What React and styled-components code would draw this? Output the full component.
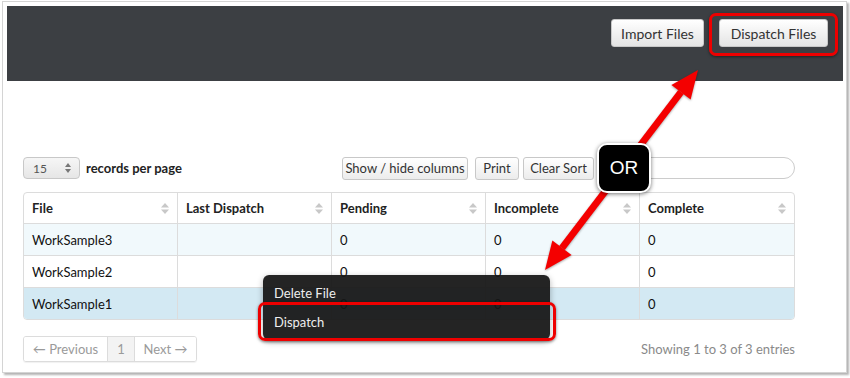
import React from 'react';
import styled, { createGlobalStyle } from 'styled-components';

const GlobalStyle = createGlobalStyle`
    html, body {
        margin: 0;
        padding: 0;
        background: #fff;
        font-family: Lato, "Open Sans", "Liberation Sans", sans-serif;
        color: #222;
    }
`;

const columns = ['File', 'Last Dispatch', 'Pending', 'Incomplete', 'Complete'];

const rows = [
    { file: 'WorkSample3', last: '', pending: '0', incomplete: '0', complete: '0', tone: 'stripe' },
    { file: 'WorkSample2', last: '', pending: '0', incomplete: '0', complete: '0', tone: 'plain' },
    { file: 'WorkSample1', last: '', pending: '0', incomplete: '0', complete: '0', tone: 'selected' },
];

const rowColors = {
    stripe: '#f1f9fc',
    plain: '#ffffff',
    selected: '#d3e9f3',
};

const SortIcon = () => (
    <svg width="8" height="11" viewBox="0 0 8 11">
        <path d="M4 0 L8 4.5 H0 Z" fill="#c8c8c8" />
        <path d="M4 11 L8 6.5 H0 Z" fill="#c8c8c8" />
    </svg>
);

const SpinIcon = () => (
    <svg width="6" height="10" viewBox="0 0 6 10">
        <path d="M3 0 L6 4 H0 Z" fill="#777" />
        <path d="M3 10 L6 6 H0 Z" fill="#777" />
    </svg>
);

const App = () => {
    return (
        <Page>
            <GlobalStyle />
            <Frame>
                <Header>
                    <HeadButton>Import Files</HeadButton>
                    <HeadButton $wide>Dispatch Files</HeadButton>
                </Header>
                <Content>
                    <Toolbar>
                        <PerPage>
                            <Select>
                                <span>15</span>
                                <SpinIcon />
                            </Select>
                            <span>records per page</span>
                        </PerPage>
                        <Tools>
                            <ToolButton $w={126}>Show / hide columns</ToolButton>
                            <ToolButton $w={44} $gap={7}>Print</ToolButton>
                            <ToolButton $w={71} $gap={4}>Clear Sort</ToolButton>
                            <Search />
                        </Tools>
                    </Toolbar>
                    <Table>
                        <thead>
                            <tr>
                                {columns.map((c) => (
                                    <th key={c}>
                                        <HeadCell>
                                            {c}
                                            <SortIcon />
                                        </HeadCell>
                                    </th>
                                ))}
                            </tr>
                        </thead>
                        <tbody>
                            {rows.map((r) => (
                                <Row key={r.file} $tone={r.tone}>
                                    <td>{r.file}</td>
                                    <td>{r.last}</td>
                                    <td>{r.pending}</td>
                                    <td>{r.incomplete}</td>
                                    <td>{r.complete}</td>
                                </Row>
                            ))}
                        </tbody>
                    </Table>
                    <Footer>
                        <Pager>
                            <PageItem $w={83}>← Previous</PageItem>
                            <PageItem $w={27} $active>1</PageItem>
                            <PageItem $w={62}>Next →</PageItem>
                        </Pager>
                        <Info>Showing 1 to 3 of 3 entries</Info>
                    </Footer>
                </Content>
            </Frame>

            <ContextMenu>
                <MenuItem>Delete File</MenuItem>
                <MenuItem>Dispatch</MenuItem>
            </ContextMenu>

            <Highlight $x={709} $y={13} $w={129} $h={43} />
            <Highlight $x={258} $y={302} $w={298} $h={39} />

            <Arrow width="850" height="378" viewBox="0 0 850 378">
                <line x1="562" y1="248" x2="681" y2="92" stroke="#f40000" strokeWidth="7" />
                <polygon points="698,70 690.6,99.6 671.4,85" fill="#f40000" />
                <polygon points="545,270 571.6,255 552.4,240.4" fill="#f40000" />
            </Arrow>

            <OrBadge>OR</OrBadge>
        </Page>
    );
};

const Page = styled.div`
    position: relative;
    width: 850px;
    height: 378px;
    overflow: hidden;
`;

const Frame = styled.div`
    margin: 1px 0 0 2px;
    width: 845px;
    height: 372px;
    box-sizing: border-box;
    border: 1px solid #d4d4d4;
    box-shadow: 2px 2px 2px rgba(0, 0, 0, 0.3);
    padding: 4px 3px 0 4px;
    background: #fff;
`;

const Header = styled.div`
    height: 75px;
    background: #3c3f43;
    display: flex;
    justify-content: flex-end;
    align-items: flex-start;
    gap: 15px;
    padding: 13px 15px 0 0;
    box-sizing: border-box;
`;

const HeadButton = styled.button`
    height: 28px;
    width: ${(p) => (p.$wide ? '109px' : '93px')};
    border: 1px solid #c8c8c8;
    border-radius: 3px;
    background: linear-gradient(#ffffff, #e4e4e4);
    font-family: inherit;
    font-size: 14px;
    color: #333;
    padding: 0;
`;

const Content = styled.div`
    padding: 76px 48px 0 16px;
`;

const Toolbar = styled.div`
    display: flex;
    justify-content: space-between;
    align-items: center;
    height: 22px;
`;

const PerPage = styled.div`
    display: flex;
    align-items: center;
    gap: 6px;
    font-size: 13px;
    font-weight: 700;
    color: #222;
`;

const Select = styled.div`
    width: 57px;
    height: 22px;
    box-sizing: border-box;
    border: 1px solid #c8c8c8;
    border-radius: 4px;
    background: linear-gradient(#f6f6f6, #e6e6e6);
    display: flex;
    align-items: center;
    justify-content: space-between;
    padding: 0 8px 0 9px;
    font-size: 12px;
    font-weight: 400;
    color: #555;
`;

const Tools = styled.div`
    display: flex;
    align-items: center;
`;

const ToolButton = styled.button`
    width: ${(p) => p.$w}px;
    margin-left: ${(p) => p.$gap || 0}px;
    height: 23px;
    border: 1px solid #c8c8c8;
    border-radius: 3px;
    background: linear-gradient(#ffffff, #ececec);
    font-family: inherit;
    font-size: 13px;
    color: #333;
    padding: 0;
`;

const Search = styled.div`
    width: 170px;
    height: 22px;
    box-sizing: border-box;
    margin-left: 31px;
    border: 1px solid #cccccc;
    border-radius: 11px;
    background: #fff;
`;

const Table = styled.table`
    margin-top: 13px;
    width: 772px;
    border-collapse: separate;
    border-spacing: 0;
    border: 1px solid #dcdcdc;
    border-radius: 4px;
    overflow: hidden;
    table-layout: fixed;
    font-size: 13px;

    th, td {
        border-right: 1px solid #dcdcdc;
        text-align: left;
        padding: 0 8px;
    }
    th:last-child, td:last-child {
        border-right: none;
    }
    th {
        height: 30px;
        font-weight: 700;
        color: #222;
        border-bottom: 1px solid #dcdcdc;
    }
`;

const HeadCell = styled.div`
    display: flex;
    justify-content: space-between;
    align-items: center;
`;

const Row = styled.tr`
    background: ${(p) => rowColors[p.$tone]};
    td {
        height: 31px;
        color: #111;
        border-bottom: 1px solid #dcdcdc;
    }
    &:last-child td {
        border-bottom: none;
    }
`;

const Footer = styled.div`
    margin-top: 16px;
    width: 772px;
    display: flex;
    justify-content: space-between;
    align-items: center;
`;

const Pager = styled.div`
    display: flex;
    border: 1px solid #dcdcdc;
    border-radius: 3px;
    box-shadow: 0 1px 1px rgba(0, 0, 0, 0.06);
    overflow: hidden;
`;

const PageItem = styled.div`
    width: ${(p) => p.$w}px;
    height: 24px;
    box-sizing: border-box;
    display: flex;
    align-items: center;
    justify-content: center;
    font-size: 13px;
    color: #9a9a9a;
    background: ${(p) => (p.$active ? '#f3f3f3' : '#fff')};
    & + & {
        border-left: 1px solid #dcdcdc;
    }
`;

const Info = styled.div`
    font-size: 13px;
    color: #8a8a8a;
`;

const ContextMenu = styled.div`
    position: absolute;
    left: 263px;
    top: 275px;
    width: 287px;
    padding: 3px 0 4px;
    border-radius: 6px;
    background: rgba(22, 22, 22, 0.94);
    box-shadow: 0 2px 6px rgba(0, 0, 0, 0.3);
`;

const MenuItem = styled.div`
    height: 29px;
    display: flex;
    align-items: center;
    padding-left: 11px;
    font-size: 13px;
    color: #eeeeee;
`;

const Highlight = styled.div`
    position: absolute;
    left: ${(p) => p.$x}px;
    top: ${(p) => p.$y}px;
    width: ${(p) => p.$w}px;
    height: ${(p) => p.$h}px;
    box-sizing: border-box;
    border: 3px solid #ee0000;
    border-radius: 7px;
    box-shadow: 0 1px 3px rgba(0, 0, 0, 0.5);
`;

const Arrow = styled.svg`
    position: absolute;
    left: 0;
    top: 0;
    pointer-events: none;
    filter: drop-shadow(0 1px 1px rgba(0, 0, 0, 0.35));
`;

const OrBadge = styled.div`
    position: absolute;
    left: 597px;
    top: 143px;
    width: 54px;
    height: 50px;
    box-sizing: border-box;
    border: 2px solid #fff;
    border-radius: 10px;
    background: #000;
    box-shadow: 0 1px 4px rgba(0, 0, 0, 0.55);
    display: flex;
    align-items: center;
    justify-content: center;
    font-family: "Liberation Sans", Arial, sans-serif;
    font-size: 19px;
    color: #fff;
`;

export default App;
